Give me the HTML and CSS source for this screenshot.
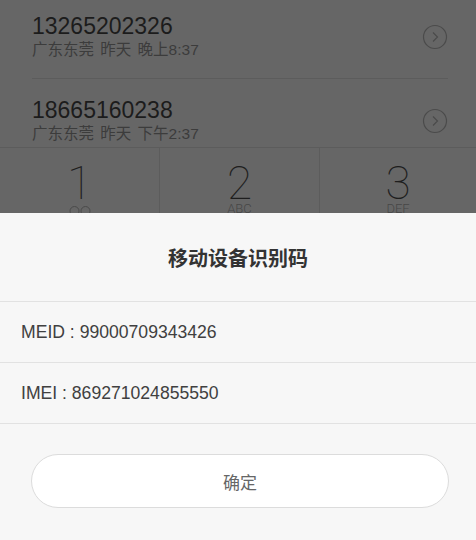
FILE: index.html
```html
<!DOCTYPE html>
<html lang="zh-CN">
<head>
  <meta charset="UTF-8">
  <title>移动设备识别码</title>
  <link rel="stylesheet" href="styles.css">
</head>
<body>
  <div class="screen">
    <div class="calls">
      <div class="call">
        <div class="call-info">
          <div class="call-number">13265202326</div>
          <div class="call-meta">广东东莞 昨天 晚上8:37</div>
        </div>
        <svg class="call-more" width="26" height="26" viewBox="0 0 26 26">
          <circle cx="13" cy="13" r="11.5" fill="none" stroke="#4b4b4b" stroke-width="1.2"/>
          <path d="M11 8.5 L15.5 13 L11 17.5" fill="none" stroke="#4b4b4b" stroke-width="1.2"/>
        </svg>
      </div>
      <div class="call">
        <div class="call-info">
          <div class="call-number">18665160238</div>
          <div class="call-meta">广东东莞 昨天 下午2:37</div>
        </div>
        <svg class="call-more" width="26" height="26" viewBox="0 0 26 26">
          <circle cx="13" cy="13" r="11.5" fill="none" stroke="#4b4b4b" stroke-width="1.2"/>
          <path d="M11 8.5 L15.5 13 L11 17.5" fill="none" stroke="#4b4b4b" stroke-width="1.2"/>
        </svg>
      </div>
    </div>

    <div class="keypad">
      <div class="key">
        <div class="key-digit">1</div>
        <svg class="key-voicemail" width="24" height="14" viewBox="0 0 24 14">
          <circle cx="6.5" cy="6" r="4.5" fill="none" stroke="#4a4a4a" stroke-width="1"/>
          <circle cx="17.5" cy="6" r="4.5" fill="none" stroke="#4a4a4a" stroke-width="1"/>
          <path d="M6.5 10.5 H17.5" stroke="#4a4a4a" stroke-width="1"/>
        </svg>
      </div>
      <div class="key">
        <div class="key-digit">2</div>
        <div class="key-letters">ABC</div>
      </div>
      <div class="key">
        <div class="key-digit">3</div>
        <div class="key-letters">DEF</div>
      </div>
    </div>

    <div class="dialog">
      <div class="dialog-title">移动设备识别码</div>
      <div class="dialog-row">MEID : 99000709343426</div>
      <div class="dialog-row">IMEI : 869271024855550</div>
      <div class="dialog-actions">
        <button class="dialog-button">确定</button>
      </div>
    </div>
  </div>
</body>
</html>
```

FILE: styles.css
```css
body {
  margin: 0;
  background: #666666;
  font-family: "Liberation Sans", "Noto Sans CJK SC", sans-serif;
}

.screen {
  position: relative;
  width: 476px;
  height: 540px;
  overflow: hidden;
}

.calls {
  height: 148px;
  overflow: hidden;
  border-bottom: 1px solid #5c5c5c;
  box-sizing: border-box;
}

.call {
  display: flex;
  align-items: center;
  justify-content: space-between;
  height: 84px;
  margin: 0 28px 0 32px;
  border-bottom: 1px solid #5c5c5c;
  box-sizing: border-box;
}

.call:first-child {
  margin-top: -5px;
}

.call-number {
  font-family: "Liberation Sans Narrow", "Liberation Sans", sans-serif;
  font-size: 23px;
  line-height: 26px;
  color: #1c1c1c;
}

.call-meta {
  font-size: 15.5px;
  line-height: 20px;
  margin-top: 1px;
  color: #3c3c3c;
  word-spacing: 2px;
}

.call-more {
  display: block;
}

/* only the top of the keypad peeks out above the dialog */
.keypad {
  display: flex;
  height: 65px;
  overflow: hidden;
}

.key {
  flex: 0 0 160px;
  display: flex;
  flex-direction: column;
  align-items: center;
  padding-top: 12px;
  border-right: 1px solid #5c5c5c;
  box-sizing: border-box;
}

.key:last-child {
  flex: 1;
  border-right: none;
}

.key-digit {
  flex-shrink: 0;
  font-family: "Roboto", sans-serif;
  font-weight: 100;
  font-size: 46px;
  line-height: 46px;
  color: #1e1e1e;
}

.key-letters {
  flex-shrink: 0;
  margin-top: -4px;
  font-family: "Roboto", sans-serif;
  font-weight: 300;
  font-size: 13px;
  line-height: 14px;
  color: #474747;
}

.key-voicemail {
  flex-shrink: 0;
  display: block;
  margin-top: -1px;
}

.dialog {
  position: absolute;
  left: 0;
  right: 0;
  bottom: 0;
  height: 327px;
  background: #f7f7f7;
}

.dialog-title {
  height: 89px;
  display: flex;
  align-items: center;
  justify-content: center;
  font-size: 20px;
  font-weight: bold;
  color: #333333;
  border-bottom: 1px solid #e2e2e2;
  box-sizing: border-box;
}

.dialog-row {
  height: 60px;
  display: flex;
  align-items: center;
  padding-left: 21px;
  font-size: 17.6px;
  color: #404040;
  border-bottom: 1px solid #e2e2e2;
}

.dialog-actions {
  padding: 30px 27px 0 31px;
}

.dialog-button {
  display: block;
  width: 100%;
  height: 54px;
  border: 1px solid #dcdcdc;
  border-radius: 27px;
  background: #ffffff;
  font-family: "Liberation Sans", "Noto Sans CJK SC", sans-serif;
  font-size: 17px;
  color: #666666;
}
```
